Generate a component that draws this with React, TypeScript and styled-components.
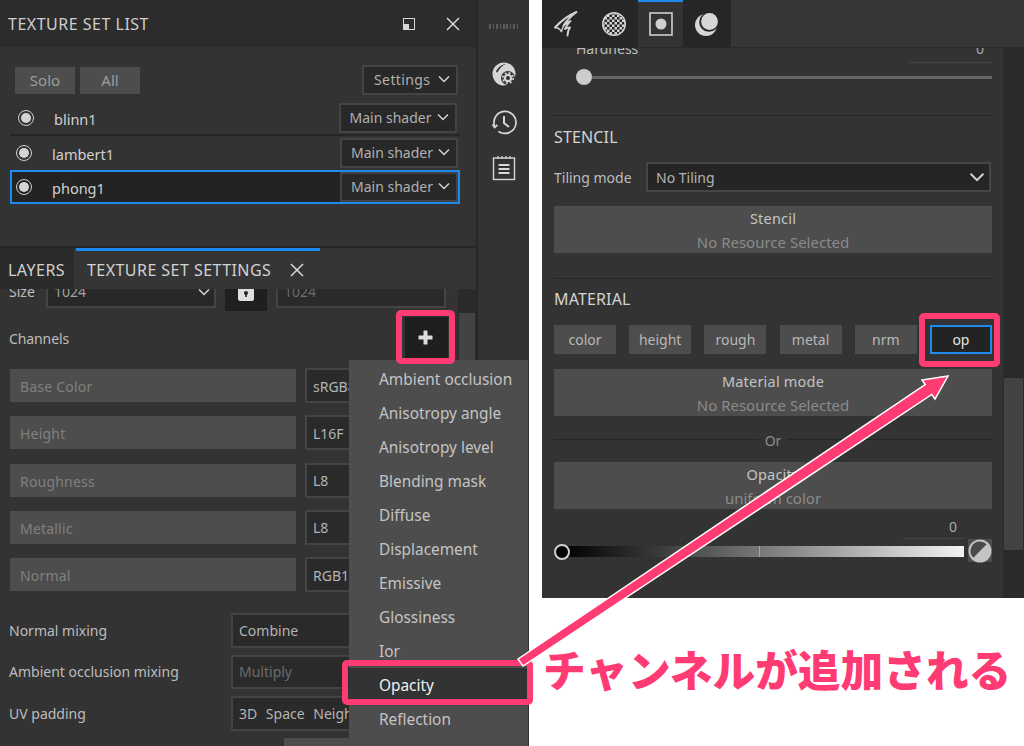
import React from "react";
import styled, { createGlobalStyle } from "styled-components";

const PINK = "#ff3b73";
const BLUE = "#1f8aee";

const GlobalStyle = createGlobalStyle`
    html, body {
        margin: 0;
        padding: 0;
        background: #fff;
    }
    * {
        box-sizing: border-box;
    }
`;

const Page = styled.div`
    position: relative;
    display: flex;
    width: 1024px;
    height: 746px;
    overflow: hidden;
    background: #fff;
    color: #bdbdbd;
    font-family: "Noto Sans", "Noto Sans CJK JP", sans-serif;
    font-size: 14px;
    letter-spacing: 0;
`;

const LeftPane = styled.div`
    display: flex;
    flex: none;
    width: 529px;
    height: 746px;
    background: #333;
`;

const MainColumn = styled.div`
    display: flex;
    flex-direction: column;
    flex: none;
    width: 476px;
    height: 100%;
`;

const SideStrip = styled.div`
    display: flex;
    flex-direction: column;
    align-items: center;
    flex: 1;
    padding-top: 24px;
    border-left: 2px solid #272727;
`;

const Grip = styled.div`
    width: 30px;
    height: 5px;
    background: repeating-linear-gradient(90deg, #5c5c5c 0 1.5px, transparent 1.5px 3.5px);
`;

const StripIcon = styled.svg`
    display: block;
    width: 26px;
    height: 26px;
    margin-top: ${(p: { $top: number }) => p.$top}px;
`;

const PanelHeader = styled.div`
    display: flex;
    align-items: center;
    flex: none;
    height: 47px;
    padding: 0 16px 0 8px;
    background: #2c2c2c;
`;

const PanelTitle = styled.div`
    flex: 1;
    font-size: 16px;
    letter-spacing: 0.5px;
    color: #cfcfcf;
`;

const ListBody = styled.div`
    flex: none;
    height: 199px;
    padding: 18px 16px 0 10px;
`;

const Toolbar = styled.div`
    display: flex;
    align-items: center;
    gap: 5px;
    height: 30px;
    padding-left: 5px;
`;

const ToggleButton = styled.div`
    display: flex;
    align-items: center;
    justify-content: center;
    width: 60px;
    height: 27px;
    background: #4d4d4d;
    color: #9c9c9c;
    font-size: 15px;
`;

const SmallSelect = styled.div<{ $w: number }>`
    display: flex;
    align-items: center;
    justify-content: space-between;
    flex: none;
    width: ${(p) => p.$w}px;
    height: 30px;
    padding: 0 5px 2px 9px;
    background: #282828;
    border: 2px solid #444;
    color: #b0b0b0;
    font-size: 14px;
    white-space: nowrap;
`;

const ToolbarSelect = styled(SmallSelect)`
    margin-left: auto;
    margin-right: 2px;
    padding-left: 10px;
    letter-spacing: 0.4px;
`;

const TextureRow = styled.div<{ $selected?: boolean; $first?: boolean }>`
    display: flex;
    align-items: center;
    height: 34px;
    padding: 0 ${(p) => (p.$first ? 3.5 : 2)}px 0 ${(p) => (p.$first ? 8 : 6)}px;
    ${(p) => p.$first && "margin-top: 7px; border-bottom: 2px solid #272727;"}
    ${(p) => p.$selected && `background: #232323; box-shadow: inset 0 0 0 2px ${BLUE};`}
`;

const Radio = styled.div`
    display: flex;
    align-items: center;
    justify-content: center;
    flex: none;
    width: 16px;
    height: 16px;
    margin-top: -1px;
    border: 1.5px solid #cfcfcf;
    border-radius: 50%;

    &::after {
        content: "";
        width: 10px;
        height: 10px;
        border-radius: 50%;
        background: #d4d4d4;
    }
`;

const TextureName = styled.div`
    flex: 1;
    margin: 2px 0 0 20px;
    font-size: 14.5px;
    color: #d0d0d0;
`;

const TabBar = styled.div`
    display: flex;
    flex: none;
    height: 43px;
    border-top: 2px solid #262626;
    background: #353535;
`;

const Tab = styled.div<{ $active?: boolean }>`
    display: flex;
    align-items: center;
    height: 100%;
    font-size: 16px;
    letter-spacing: 0.45px;
    color: #d2d2d2;
    ${(p) =>
        p.$active
            ? `width: 244px; margin-left: 2px; padding: 0 0 0 11px; border-top: 3px solid ${BLUE};`
            : "width: 74px; padding: 2px 0 0 8px; background: #2b2b2b;"}
`;

const TabClose = styled.svg`
    width: 16px;
    height: 16px;
    margin: 0 0 0 18px;
`;

const SettingsArea = styled.div`
    display: flex;
    flex: 1;
    min-height: 0;
    overflow: hidden;
    background: #333;
`;

const SettingsContent = styled.div`
    flex: none;
    width: 458px;
    padding: 0 10px 0 9px;
`;

const ScrollTrack = styled.div<{ $w: number }>`
    flex: none;
    width: ${(p) => p.$w}px;
    background: #2a2a2a;
`;

const ScrollThumb = styled.div<{ $top: number; $h: number }>`
    width: calc(100% - 2px);
    height: ${(p) => p.$h}px;
    margin: ${(p) => p.$top}px 1px 0;
    background: #434343;
`;

const SizeRow = styled.div`
    display: flex;
    align-items: flex-start;
    height: 30px;
    margin-top: -11px;
`;

const SizeLabel = styled.div`
    width: 37px;
    line-height: 28px;
`;

const SizeSelect = styled.div`
    display: flex;
    align-items: center;
    justify-content: space-between;
    width: 170px;
    height: 30px;
    padding: 0 3px 3px 6px;
    background: #282828;
    border: 2px solid #444;
    color: #a0a0a0;
`;

const LockButton = styled.div`
    display: flex;
    align-items: flex-end;
    justify-content: center;
    width: 42px;
    height: 33px;
    margin-left: 9px;
    padding-bottom: 10px;
    background: #1f1f1f;
`;

const SizeInput = styled.div`
    width: 170px;
    height: 30px;
    margin-left: 9px;
    padding: 2px 6px;
    background: #2a2a2a;
    border: 2px solid #444;
    color: #6a6a6a;
`;

const ChannelsRow = styled.div`
    display: flex;
    align-items: center;
    justify-content: space-between;
    height: 41px;
    margin-top: 9px;
`;

const ChannelsLabel = styled.div`
    padding-top: 2px;
    letter-spacing: -0.1px;
`;

const AddButton = styled.div`
    display: flex;
    align-items: center;
    justify-content: center;
    width: 43px;
    height: 41px;
    padding-right: 2px;
    background: #1e1e1e;
`;

const ChannelRow = styled.div`
    display: flex;
    align-items: center;
    height: 33px;
    margin: 0 0 14.25px 1px;
`;

const ChannelList = styled.div`
    height: 244px;
    margin-top: 11px;
`;

const ChannelName = styled.div`
    display: flex;
    align-items: center;
    width: 286px;
    height: 33px;
    padding: 2px 0 0 10px;
    background: #4d4d4d;
    color: #808080;
    letter-spacing: 0.2px;
`;

const ChannelFormat = styled.div`
    display: flex;
    align-items: center;
    flex: none;
    width: 100px;
    height: 35px;
    margin-left: 9px;
    padding: 1px 0 0 6px;
    background: #2a2a2a;
    border: 2px solid #444;
    color: #b4b4b4;
`;

const MixRow = styled.div`
    display: flex;
    align-items: center;
    height: 34.5px;
    margin-bottom: 7px;
`;

const MixLabel = styled.div`
    flex: none;
    width: 222px;
`;

const MixSelect = styled.div<{ $disabled?: boolean }>`
    display: flex;
    align-items: center;
    flex: none;
    width: 200px;
    height: 34.5px;
    padding-left: 6px;
    background: #2a2a2a;
    border: 2px solid #444;
    white-space: nowrap;
    word-spacing: 5px;
    color: ${(p) => (p.$disabled ? "#6a6a6a" : "#b4b4b4")};
`;

const BakeButton = styled.div`
    width: 120px;
    height: 30px;
    margin: 6px 0 0 275px;
    background: #4d4d4d;
`;

/* ------ dropdown over the settings panel ------ */

const ChannelMenu = styled.div`
    position: absolute;
    left: 349px;
    top: 360px;
    width: 179px;
    height: 386px;
    padding-top: 2px;
    background: #4d4d4d;
`;

const MenuItem = styled.div<{ $active?: boolean }>`
    display: flex;
    align-items: center;
    height: 34px;
    padding-left: 30px;
    font-size: 15.4px;
    white-space: nowrap;
    color: ${(p) => (p.$active ? "#f0f0f0" : "#c4c4c4")};
    background: ${(p) => (p.$active ? "#333" : "transparent")};
`;

/* ------ right hand panel ------ */

const RightPane = styled.div`
    display: flex;
    flex-direction: column;
    flex: none;
    width: 482px;
    height: 598px;
    margin-left: 13px;
    background: #333;
`;

const IconTabs = styled.div`
    display: flex;
    flex: none;
    height: 47px;
    background: #363636;
    box-shadow: 0 1px 0 #2a2a2a;
    position: relative;
    z-index: 1;
`;

const IconTab = styled.div<{ $w: number; $active?: boolean }>`
    display: flex;
    align-items: center;
    justify-content: center;
    width: ${(p) => p.$w}px;
    height: 47px;
    background: ${(p) => (p.$active ? "#333" : "#262626")};
    ${(p) => p.$active && `border-top: 2px solid ${BLUE}; padding-bottom: 1px;`}
`;

const PropsBody = styled.div`
    display: flex;
    flex: 1;
    min-height: 0;
    overflow: hidden;
`;

const PropsContent = styled.div`
    flex: none;
    width: 461px;
    padding: 0 11px 0 12px;
`;

const HardnessRow = styled.div`
    display: flex;
    justify-content: space-between;
    height: 24px;
    margin-top: -8px;
    padding-left: 22px;
`;

const ValueBox = styled.div`
    width: 84px;
    height: 24px;
    padding-right: 8px;
    border-bottom: 1px solid #444;
    text-align: right;
    color: #a8a8a8;
`;

const SliderRow = styled.div`
    display: flex;
    align-items: center;
    height: 16px;
    margin-top: 6px;
    padding-left: 22px;
`;

const SliderThumb = styled.div`
    flex: none;
    width: 16px;
    height: 16px;
    border-radius: 50%;
    background: #cdcdcd;
`;

const SliderTrack = styled.div`
    flex: 1;
    height: 3px;
    background: #646464;
`;

const Divider = styled.div<{ $top: number }>`
    height: 1px;
    margin-top: ${(p) => p.$top}px;
    background: #242424;
`;

const SectionTitle = styled.div<{ $top: number }>`
    height: 20px;
    margin-top: ${(p) => p.$top}px;
    font-size: 16px;
    letter-spacing: 0.15px;
    line-height: 20px;
    color: #d4d4d4;
`;

const TilingRow = styled.div`
    display: flex;
    align-items: center;
    height: 30px;
    margin-top: 15px;
`;

const TilingLabel = styled.div`
    flex: none;
    width: 92px;
`;

const TilingSelect = styled.div`
    display: flex;
    align-items: center;
    justify-content: space-between;
    flex: 1;
    height: 30px;
    margin-right: 1px;
    padding: 0 3px 0 8px;
    background: #252525;
    border: 2px solid #464646;
    color: #b4b4b4;
`;

const ResourceBlock = styled.div<{ $top: number }>`
    display: flex;
    flex-direction: column;
    align-items: center;
    height: 47px;
    margin-top: ${(p) => p.$top}px;
    background: #4d4d4d;
`;

const ResourceTitle = styled.div`
    height: 24px;
    line-height: 24px;
    font-size: 14.5px;
    letter-spacing: 0.2px;
    color: #c4c4c4;
`;

const ResourceValue = styled.div`
    height: 24px;
    line-height: 24px;
    font-size: 15px;
    color: #8a8a8a;
`;

const ChannelTabs = styled.div`
    display: flex;
    justify-content: space-between;
    height: 29px;
    margin-top: 16px;
`;

const ChannelTab = styled.div<{ $active?: boolean }>`
    display: flex;
    align-items: center;
    justify-content: center;
    width: 62px;
    height: 29px;
    padding-bottom: 1px;
    ${(p) =>
        p.$active
            ? `background: #232323; border: 2px solid ${BLUE}; color: #e4e4e4;`
            : "background: #4d4d4d; color: #b8b8b8;"}
`;

const OrRow = styled.div`
    display: flex;
    align-items: center;
    gap: 7px;
    height: 20px;
    margin-top: 14px;
    color: #8e8e8e;

    &::before,
    &::after {
        content: "";
        flex: 1;
        height: 1px;
        margin-top: -2px;
        background: #262626;
    }
`;

const ValueRow = styled.div`
    display: flex;
    justify-content: flex-end;
    height: 22px;
    margin-top: 8px;
    padding-right: 27px;
`;

const ShortValueBox = styled(ValueBox)`
    width: 62px;
    height: 22px;
    line-height: 20px;
`;

const GradientRow = styled.div`
    display: flex;
    align-items: center;
    height: 23px;
`;

const GradientThumb = styled.div`
    position: relative;
    z-index: 1;
    flex: none;
    width: 16px;
    height: 16px;
    margin-top: 3px;
    border: 2px solid #d0d0d0;
    border-radius: 50%;
    background: #000;
`;

const GradientBar = styled.div`
    position: relative;
    flex: 1;
    height: 11px;
    margin: 1px 0 0 -8px;
    background: linear-gradient(90deg, #000 0%, #f2f2f2 100%);

    &::after {
        content: "";
        position: absolute;
        left: 49%;
        top: 0;
        width: 1.5px;
        height: 100%;
        background: #a8a8a8;
    }
`;

const Swatch = styled.div`
    display: flex;
    align-items: center;
    justify-content: center;
    flex: none;
    width: 24px;
    height: 23px;
    margin-left: 4px;
    background: #4d4d4d;
`;

/* ------ tutorial annotations drawn over the screenshot ------ */

const Highlight = styled.div<{ $x: number; $y: number; $w: number; $h: number }>`
    position: absolute;
    left: ${(p) => p.$x}px;
    top: ${(p) => p.$y}px;
    width: ${(p) => p.$w}px;
    height: ${(p) => p.$h}px;
    border: 6px solid ${PINK};
    border-radius: 5px;
`;

const ArrowOverlay = styled.svg`
    position: absolute;
    left: 0;
    top: 0;
    width: 1024px;
    height: 746px;
    pointer-events: none;
`;

const Caption = styled.div`
    position: absolute;
    left: 543px;
    top: 638px;
    font-family: "Noto Sans CJK JP", sans-serif;
    font-size: 42.7px;
    font-weight: 900;
    line-height: 60px;
    white-space: nowrap;
    color: ${PINK};
`;

const Chevron: React.FC<{ size?: number }> = ({ size = 14 }) => (
    <svg width={size} height={size} viewBox="0 0 14 14" fill="none" stroke="#d4d4d4" strokeWidth="1.5">
        <polyline points="2,4.5 7,9.5 12,4.5" />
    </svg>
);

const CloseIcon: React.FC = () => (
    <svg width="14" height="14" viewBox="0 0 14 14" stroke="#dcdcdc" strokeWidth="1.4">
        <line x1="1" y1="1" x2="13" y2="13" />
        <line x1="13" y1="1" x2="1" y2="13" />
    </svg>
);

const RestoreIcon: React.FC = () => (
    <svg width="12" height="12" viewBox="0 0 12 12" style={{ marginRight: 31 }}>
        <rect x="0.5" y="0.5" width="11" height="11" fill="none" stroke="#d8d8d8" />
        <rect x="0.5" y="6" width="5.5" height="5.5" fill="#d8d8d8" />
    </svg>
);

const GlobeGearIcon: React.FC = () => (
    <StripIcon $top={32} viewBox="0 0 26 26">
        <circle cx="13" cy="13" r="11.5" fill="#d6d6d6" />
        <path d="M5 11 C6 7 10 4 15 2.8 C11 5 8 8 6.5 11.5 Z" fill="#333" />
        <circle cx="17" cy="17" r="7" fill="#333" />
        <circle cx="17" cy="17" r="3.2" fill="none" stroke="#d6d6d6" strokeWidth="2.2" />
        <circle cx="17" cy="17" r="5.2" fill="none" stroke="#d6d6d6" strokeWidth="1.6" strokeDasharray="2 2.08" />
    </StripIcon>
);

const HistoryIcon: React.FC = () => (
    <StripIcon $top={22} viewBox="0 0 26 26" fill="none" stroke="#d6d6d6" strokeWidth="1.7">
        <path d="M3.6 17 A11 11 0 1 1 9 23.2 C 8.4 23 8 22.8 7.5 22.5" />
        <polyline points="1.5,15.5 3.6,18.5 6.4,16" />
        <polyline points="13,7 13,14 18,18" strokeWidth="2" />
    </StripIcon>
);

const NotesIcon: React.FC = () => (
    <StripIcon $top={20} viewBox="0 0 26 26" fill="none" stroke="#d6d6d6">
        <rect x="2.5" y="3" width="21" height="21.5" strokeWidth="1.4" />
        <path d="M7 1v3 M11 1v3 M15 1v3 M19 1v3" strokeWidth="1.2" />
        <path d="M7.5 10h11 M7.5 14h11 M7.5 18h11" strokeWidth="2" />
    </StripIcon>
);

const LockIcon: React.FC = () => (
    <svg width="16" height="14" viewBox="0 0 16 14">
        <rect x="0" y="0" width="16" height="14" rx="2" fill="#dedede" />
        <circle cx="8" cy="6" r="2" fill="#222" />
        <rect x="7.2" y="6" width="1.6" height="4" fill="#222" />
    </svg>
);

const PlusIcon: React.FC = () => (
    <svg width="15" height="15" viewBox="0 0 15 15" fill="#dcdcdc">
        <rect x="5.5" y="0.5" width="4" height="14" rx="0.5" />
        <rect x="0.5" y="5.5" width="14" height="4" rx="0.5" />
    </svg>
);

const BrushIcon: React.FC = () => (
    <svg width="24" height="26" viewBox="0 0 24 26" fill="none" stroke="#d2d2d2" strokeLinecap="round" strokeLinejoin="round">
        <path d="M1 16.5 C7 10 14 4.5 22.5 1 C16 6 12 10.5 9.5 14.5 C12 12.5 14.5 11 16.5 10 C14 13 12 15.5 11 18 C13 17 14.5 16.5 16 16.5 C14.5 18.5 13.5 21 13.5 24.5" strokeWidth="1.9" />
        <path d="M1 16.5 C3.5 16.5 5.5 17.5 7.5 20.5" strokeWidth="1.4" />
        <path d="M7.5 20.5 C8 17.5 9 15.5 10.5 13.5" strokeWidth="1.4" />
    </svg>
);

const CheckerIcon: React.FC = () => (
    <svg width="24" height="24" viewBox="0 0 24 24">
        <defs>
            <pattern id="checker" width="5" height="5" patternUnits="userSpaceOnUse">
                <rect width="5" height="5" fill="#d4d4d4" />
                <rect width="2.5" height="2.5" fill="#262626" />
                <rect x="2.5" y="2.5" width="2.5" height="2.5" fill="#262626" />
            </pattern>
        </defs>
        <circle cx="12" cy="12" r="12" fill="#d4d4d4" />
        <circle cx="12" cy="12" r="10.5" fill="url(#checker)" />
    </svg>
);

const MaskIcon: React.FC = () => (
    <svg width="24" height="24" viewBox="0 0 24 24">
        <rect x="1" y="1" width="22" height="22" fill="none" stroke="#cfcfcf" strokeWidth="1.6" />
        <circle cx="12" cy="12" r="5.5" fill="#cfcfcf" />
    </svg>
);

const MoonIcon: React.FC = () => (
    <svg width="24" height="24" viewBox="0 0 24 24">
        <circle cx="11" cy="13" r="11" fill="#d6d6d6" />
        <circle cx="14" cy="10" r="9.8" fill="#262626" />
        <circle cx="14.5" cy="9.5" r="8.4" fill="#d6d6d6" />
    </svg>
);

const SwatchIcon: React.FC = () => (
    <svg width="24" height="24" viewBox="0 0 24 24">
        <circle cx="12" cy="12" r="11.5" fill="#c4c4c4" />
        <path d="M12 2.5 A 9.5 9.5 0 0 0 5.3 18.7 L18.7 5.3 A 9.5 9.5 0 0 0 12 2.5 Z" fill="#4a4a4a" />
    </svg>
);

const textures = [
    { name: "blinn1", width: 118, first: true },
    { name: "lambert1", width: 118 },
    { name: "phong1", width: 118, selected: true },
];

const channels = [
    ["Base Color", "sRGB8"],
    ["Height", "L16F"],
    ["Roughness", "L8"],
    ["Metallic", "L8"],
    ["Normal", "RGB16F"],
];

const mixes = [
    { label: "Normal mixing", value: "Combine" },
    { label: "Ambient occlusion mixing", value: "Multiply", disabled: true },
    { label: "UV padding", value: "3D Space Neighbor" },
];

const menuItems = [
    "Ambient occlusion",
    "Anisotropy angle",
    "Anisotropy level",
    "Blending mask",
    "Diffuse",
    "Displacement",
    "Emissive",
    "Glossiness",
    "Ior",
    "Opacity",
    "Reflection",
];

const materialTabs = ["color", "height", "rough", "metal", "nrm", "op"];

const App: React.FC = () => {
    return (
        <Page>
            <GlobalStyle />
            <LeftPane>
                <MainColumn>
                    <PanelHeader>
                        <PanelTitle>TEXTURE SET LIST</PanelTitle>
                        <RestoreIcon />
                        <CloseIcon />
                    </PanelHeader>
                    <ListBody>
                        <Toolbar>
                            <ToggleButton>Solo</ToggleButton>
                            <ToggleButton>All</ToggleButton>
                            <ToolbarSelect $w={96}>
                                Settings <Chevron />
                            </ToolbarSelect>
                        </Toolbar>
                        {textures.map((t) => (
                            <TextureRow key={t.name} $first={t.first} $selected={t.selected}>
                                <Radio />
                                <TextureName>{t.name}</TextureName>
                                <SmallSelect $w={t.width}>
                                    Main shader <Chevron />
                                </SmallSelect>
                            </TextureRow>
                        ))}
                    </ListBody>
                    <TabBar>
                        <Tab>LAYERS</Tab>
                        <Tab $active>
                            TEXTURE SET SETTINGS
                            <TabClose viewBox="0 0 16 16" stroke="#dcdcdc" strokeWidth="1.5">
                                <line x1="2" y1="2" x2="14" y2="14" />
                                <line x1="14" y1="2" x2="2" y2="14" />
                            </TabClose>
                        </Tab>
                    </TabBar>
                    <SettingsArea>
                        <SettingsContent>
                            <SizeRow>
                                <SizeLabel>Size</SizeLabel>
                                <SizeSelect>
                                    1024 <Chevron />
                                </SizeSelect>
                                <LockButton>
                                    <LockIcon />
                                </LockButton>
                                <SizeInput>1024</SizeInput>
                            </SizeRow>
                            <ChannelsRow>
                                <ChannelsLabel>Channels</ChannelsLabel>
                                <AddButton>
                                    <PlusIcon />
                                </AddButton>
                            </ChannelsRow>
                            <ChannelList>
                                {channels.map(([name, format]) => (
                                    <ChannelRow key={name}>
                                        <ChannelName>{name}</ChannelName>
                                        <ChannelFormat>{format}</ChannelFormat>
                                    </ChannelRow>
                                ))}
                            </ChannelList>
                            {mixes.map((m) => (
                                <MixRow key={m.label}>
                                    <MixLabel>{m.label}</MixLabel>
                                    <MixSelect $disabled={m.disabled}>{m.value}</MixSelect>
                                </MixRow>
                            ))}
                            <BakeButton />
                        </SettingsContent>
                        <ScrollTrack $w={18}>
                            <ScrollThumb $top={24} $h={400} />
                        </ScrollTrack>
                    </SettingsArea>
                </MainColumn>
                <SideStrip>
                    <Grip />
                    <GlobeGearIcon />
                    <HistoryIcon />
                    <NotesIcon />
                </SideStrip>
            </LeftPane>

            <RightPane>
                <IconTabs>
                    <IconTab $w={48}>
                        <BrushIcon />
                    </IconTab>
                    <IconTab $w={48}>
                        <CheckerIcon />
                    </IconTab>
                    <IconTab $w={45} $active>
                        <MaskIcon />
                    </IconTab>
                    <IconTab $w={48}>
                        <MoonIcon />
                    </IconTab>
                </IconTabs>
                <PropsBody>
                    <PropsContent>
                        <HardnessRow>
                            Hardness
                            <ValueBox>0</ValueBox>
                        </HardnessRow>
                        <SliderRow>
                            <SliderThumb />
                            <SliderTrack />
                        </SliderRow>
                        <Divider $top={30} />
                        <SectionTitle $top={11}>STENCIL</SectionTitle>
                        <TilingRow>
                            <TilingLabel>Tiling mode</TilingLabel>
                            <TilingSelect>
                                No Tiling <Chevron size={18} />
                            </TilingSelect>
                        </TilingRow>
                        <ResourceBlock $top={14}>
                            <ResourceTitle>Stencil</ResourceTitle>
                            <ResourceValue>No Resource Selected</ResourceValue>
                        </ResourceBlock>
                        <Divider $top={25} />
                        <SectionTitle $top={10}>MATERIAL</SectionTitle>
                        <ChannelTabs>
                            {materialTabs.map((t) => (
                                <ChannelTab key={t} $active={t === "op"}>
                                    {t}
                                </ChannelTab>
                            ))}
                        </ChannelTabs>
                        <ResourceBlock $top={15}>
                            <ResourceTitle>Material mode</ResourceTitle>
                            <ResourceValue>No Resource Selected</ResourceValue>
                        </ResourceBlock>
                        <OrRow>Or</OrRow>
                        <ResourceBlock $top={12}>
                            <ResourceTitle>Opacity</ResourceTitle>
                            <ResourceValue>uniform color</ResourceValue>
                        </ResourceBlock>
                        <ValueRow>
                            <ShortValueBox>0</ShortValueBox>
                        </ValueRow>
                        <GradientRow>
                            <GradientThumb />
                            <GradientBar />
                            <Swatch>
                                <SwatchIcon />
                            </Swatch>
                        </GradientRow>
                    </PropsContent>
                    <ScrollTrack $w={21}>
                        <ScrollThumb $top={331} $h={172} />
                    </ScrollTrack>
                </PropsBody>
            </RightPane>

            <ChannelMenu>
                {menuItems.map((item) => (
                    <MenuItem key={item} $active={item === "Opacity"}>
                        {item}
                    </MenuItem>
                ))}
            </ChannelMenu>

            <Highlight $x={396} $y={310} $w={59} $h={54} />
            <Highlight $x={342} $y={660} $w={191} $h={45} />
            <Highlight $x={919} $y={313} $w={81} $h={54} />
            <ArrowOverlay viewBox="0 0 1024 746">
                <polygon
                    points="518,659 925.2,384.5 922,380 948,376 935,399 931.8,394.5 523,666"
                    fill={PINK}
                    stroke="#fff"
                    strokeWidth="1.5"
                />
            </ArrowOverlay>
            <Caption>チャンネルが追加される</Caption>
        </Page>
    );
};

export default App;
